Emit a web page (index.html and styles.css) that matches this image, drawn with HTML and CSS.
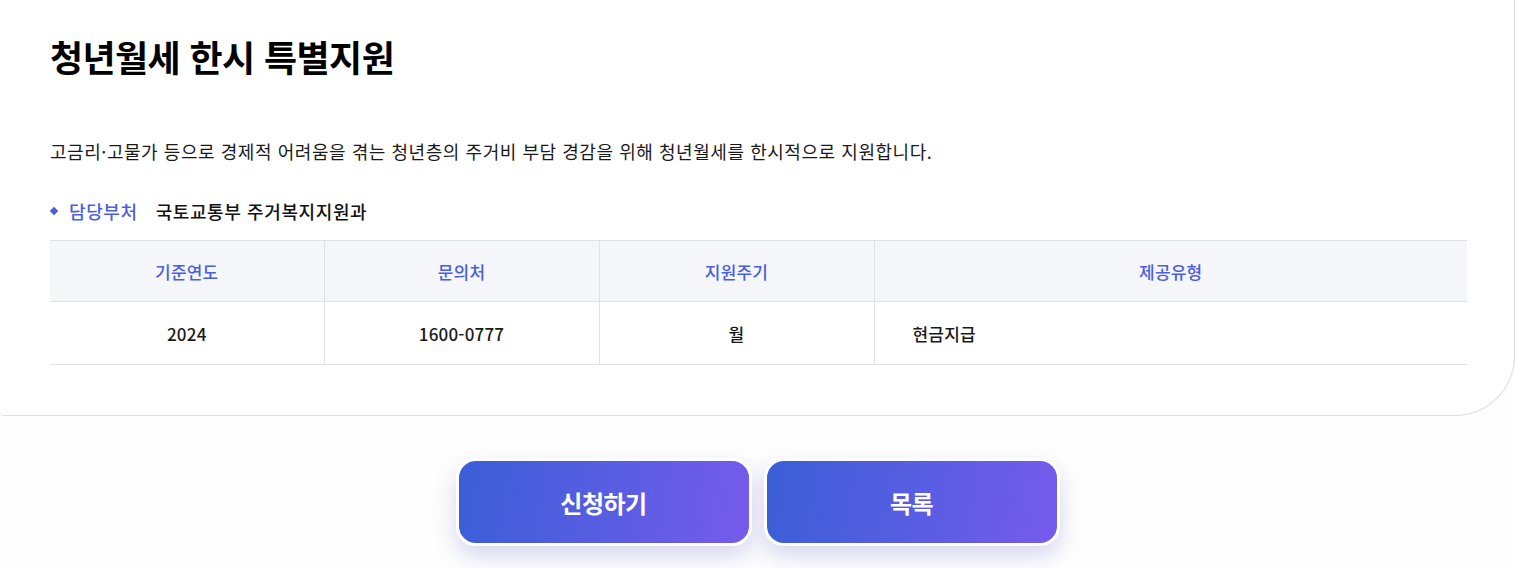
FILE: index.html
```html
<!DOCTYPE html>
<html lang="ko">
<head>
<meta charset="utf-8">
<title>청년월세 한시 특별지원</title>
<link rel="stylesheet" href="styles.css">
</head>
<body>
<main class="page">
  <section class="card">
    <h1 class="title">청년월세 한시 특별지원</h1>
    <p class="desc">고금리·고물가 등으로 경제적 어려움을 겪는 청년층의 주거비 부담 경감을 위해 청년월세를 한시적으로 지원합니다.</p>
    <div class="dept">
      <span class="dept-label">담당부처</span>
      <span class="dept-value">국토교통부 주거복지지원과</span>
    </div>
    <table class="info">
      <thead>
        <tr>
          <th class="c1">기준연도</th>
          <th class="c2">문의처</th>
          <th class="c3">지원주기</th>
          <th class="c4">제공유형</th>
        </tr>
      </thead>
      <tbody>
        <tr>
          <td>2024</td>
          <td>1600-0777</td>
          <td>월</td>
          <td class="left">현금지급</td>
        </tr>
      </tbody>
    </table>
  </section>
  <div class="actions">
    <a class="btn" href="#">신청하기</a>
    <a class="btn" href="#">목록</a>
  </div>
</main>
</body>
</html>
```
FILE: styles.css
```css
* { box-sizing: border-box; }
html, body { margin: 0; padding: 0; }
html { background: #fefefe; }
body {
  background: #fefefe;
  font-family: "Noto Sans CJK KR", "Noto Sans", sans-serif;
  color: #111;
  min-height: 100vh;
}
.page { width: 1515px; }
.card {
  background: #fff;
  border-bottom: 1px solid #dedede;
  border-right: 1px solid #dedede;
  border-radius: 0 0 60px 4px;
  padding: 30px 47px 50px 50px;
}
.title {
  margin: 0;
  font-size: 36px;
  font-weight: 700;
  letter-spacing: -0.6px;
  line-height: 52px;
  color: #000;
}
.desc {
  margin: 56px 0 0;
  font-size: 18px;
  line-height: 26px;
  letter-spacing: 0.55px;
  color: #1a1a1a;
}
.dept {
  margin-top: 34px;
  display: flex;
  align-items: center;
  font-size: 18px;
  line-height: 26px;
  letter-spacing: 0.6px;
}
.dept-label {
  display: flex;
  align-items: center;
  gap: 12px;
  color: #4a5fe0;
  font-weight: 500;
}
.dept-label::before {
  content: "";
  width: 6px;
  height: 6px;
  background: #4a5fe0;
  transform: rotate(45deg);
  margin-left: 1px;
}
.dept-value {
  margin-left: 18px;
  font-weight: 500;
  color: #111;
}
.info {
  margin-top: 16px;
  width: 100%;
  border-collapse: collapse;
  font-size: 17px;
  letter-spacing: 0.2px;
}
.info th, .info td {
  border-top: 1px solid #e2e2e6;
  border-bottom: 1px solid #e2e2e6;
  text-align: center;
  font-weight: 500;
}
.info th + th, .info td + td { border-left: 1px solid #e2e2e6; }
.info th {
  background: #f5f6fa;
  color: #4a5ee0;
  height: 61px;
}
.info td {
  color: #1a1a1a;
  height: 63px;
}
.info td.left { text-align: left; padding-left: 38px; }
.c1 { width: 274px; }
.c2 { width: 275px; }
.c3 { width: 275px; }
.actions {
  display: flex;
  justify-content: center;
  gap: 12px;
  padding-top: 42px;
}
.btn {
  width: 296px;
  height: 88px;
  display: flex;
  align-items: center;
  justify-content: center;
  border: 3px solid #fff;
  border-radius: 20px;
  background: linear-gradient(100deg, #3b5ed6 0%, #5a5de3 55%, #775bec 100%);
  color: #fff;
  font-size: 24px;
  font-weight: 700;
  letter-spacing: -0.5px;
  text-decoration: none;
  box-shadow: 0 10px 22px rgba(95, 95, 200, 0.25);
}
```
